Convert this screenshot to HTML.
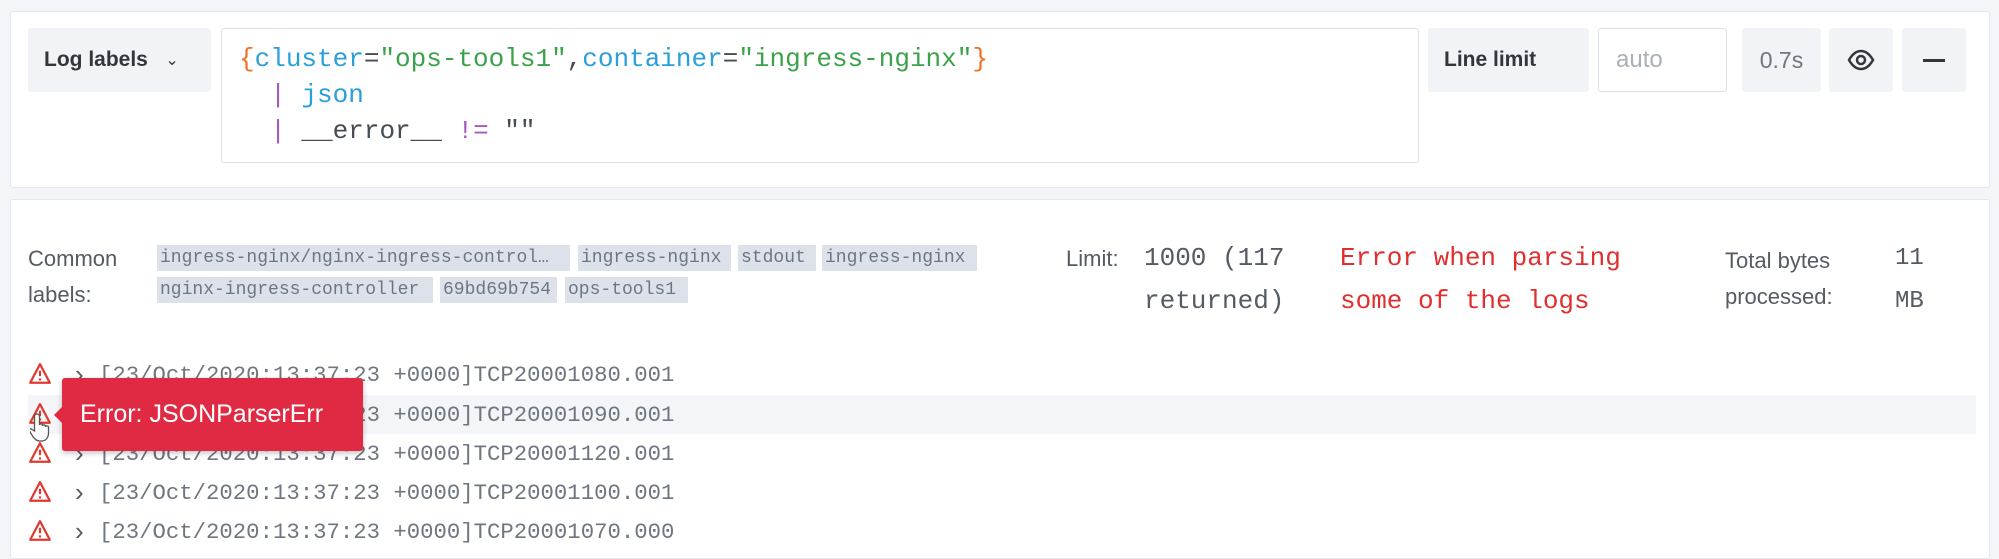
<!DOCTYPE html>
<html><head><meta charset="utf-8"><style>
*{box-sizing:border-box;margin:0;padding:0}
body{width:1999px;height:550px;background:#f4f5f8;font-family:"Liberation Sans",sans-serif;color:#464c54;position:relative;overflow:hidden}
.abs{position:absolute}
.panel{position:absolute;background:#fff;border:1px solid #e4e7ee;border-radius:3px}
.btn{position:absolute;background:#f1f3f7;border-radius:3px;display:flex;align-items:center;justify-content:center;font-size:22px;color:#33373d}
.q{position:absolute;left:239px;font-size:26px;white-space:pre;font-family:"Liberation Mono",monospace;color:#464c54}
.o{color:#f0702a}.b{color:#2a9fd8}.g{color:#3ca24a}.p{color:#a65bbf}
.chip{position:absolute;height:26px;background:#dde2ea;color:#6e7680;font-family:"Liberation Mono",monospace;font-size:18px;line-height:26px;padding:0 3px;white-space:nowrap;overflow:hidden}
.lbl{position:absolute;font-size:22px;color:#555b63}
.mv{position:absolute;font-family:"Liberation Mono",monospace;font-size:26px;white-space:pre;line-height:43px}
.row{position:absolute;left:28px;height:39px;width:1948px}
.row svg{position:absolute;left:0px;top:7px}
.row .ch{position:absolute;left:47px;top:4px;font-size:26px;color:#555b63}
.row .t{position:absolute;left:71px;top:7px;font-family:"Liberation Mono",monospace;font-size:22.3px;color:#6e7680;white-space:pre}
</style></head><body>
<div class="panel" style="left:10px;top:11px;width:1980px;height:177px"></div>
<div class="btn" style="left:28px;top:28px;width:183px;height:64px;justify-content:flex-start;padding-left:16px;font-weight:bold;font-size:21px">Log labels&nbsp;&nbsp;&nbsp;<span style="font-size:16px;font-weight:normal">&#8964;</span></div>
<div class="abs" style="left:221px;top:28px;width:1198px;height:135px;border:1px solid #dde1e8;border-radius:3px;background:#fff"></div>
<div class="q" style="top:44px"><span class="o">{</span><span class="b">cluster</span>=<span class="g">"ops-tools1"</span>,<span class="b">container</span>=<span class="g">"ingress-nginx"</span><span class="o">}</span></div>
<div class="q" style="top:80px">  <span class="p">|</span> <span class="b">json</span></div>
<div class="q" style="top:116px">  <span class="p">|</span> __error__ <span class="p">!=</span> ""</div>
<div class="btn" style="left:1428px;top:28px;width:161px;height:64px;justify-content:flex-start;padding-left:16px;font-weight:bold;font-size:21px">Line limit</div>
<div class="abs" style="left:1598px;top:28px;width:129px;height:64px;border:1px solid #dde1e8;border-radius:3px;background:#fff;font-size:24px;color:#aab0b8;padding:17px 0 0 17px">auto</div>
<div class="btn" style="left:1742px;top:28px;width:79px;height:64px;color:#6e7680;font-size:23px">0.7s</div>
<div class="btn" style="left:1829px;top:28px;width:64px;height:64px"><svg width="28" height="22" viewBox="0 0 28 22"><path d="M2 11C6 4 10 2 14 2s8 2 12 9c-4 7-8 9-12 9S6 18 2 11z" fill="none" stroke="#33373d" stroke-width="2.5"/><circle cx="14" cy="11" r="4" fill="none" stroke="#33373d" stroke-width="2.5"/></svg></div>
<div class="btn" style="left:1902px;top:28px;width:64px;height:64px"><div style="width:22px;height:3px;background:#33373d"></div></div>

<div class="panel" style="left:10px;top:199px;width:1980px;height:360px"></div>
<div class="lbl" style="left:28px;top:241px;line-height:36px">Common<br>labels:</div>
<div class="chip" style="left:157px;top:245px;width:413px">ingress-nginx/nginx-ingress-control…</div>
<div class="chip" style="left:578px;top:245px;width:153px">ingress-nginx</div>
<div class="chip" style="left:738px;top:245px;width:78px">stdout</div>
<div class="chip" style="left:822px;top:245px;width:155px">ingress-nginx</div>
<div class="chip" style="left:157px;top:277px;width:276px">nginx-ingress-controller</div>
<div class="chip" style="left:440px;top:277px;width:117px">69bd69b754</div>
<div class="chip" style="left:565px;top:277px;width:123px">ops-tools1</div>
<div class="lbl" style="left:1066px;top:246px">Limit:</div>
<div class="mv" style="left:1144px;top:237px;color:#555b63">1000 (117
returned)</div>
<div class="mv" style="left:1340px;top:237px;color:#e02f2f">Error when parsing
some of the logs</div>
<div class="lbl" style="left:1725px;top:243px;line-height:36px">Total bytes<br>processed:</div>
<div class="mv" style="left:1895px;top:237px;color:#555b63;font-size:24px">11
MB</div>

<div class="row" style="top:355px"><svg width="24" height="24" viewBox="0 0 22 22"><path d="M11 2L20 19H2z" fill="none" stroke="#e0392f" stroke-width="2" stroke-linejoin="round"/><path d="M11 8v5M11 15v2" stroke="#e0392f" stroke-width="2"/></svg><span class="ch">›</span><span class="t">[23/Oct/2020:13:37:23 +0000]TCP20001080.001</span></div>
<div class="row" style="top:395px;background:#f4f5f8"><svg width="24" height="24" viewBox="0 0 22 22"><path d="M11 2L20 19H2z" fill="none" stroke="#e0392f" stroke-width="2" stroke-linejoin="round"/><path d="M11 8v5M11 15v2" stroke="#e0392f" stroke-width="2"/></svg><span class="ch">›</span><span class="t">[23/Oct/2020:13:37:23 +0000]TCP20001090.001</span></div>
<div class="row" style="top:434px"><svg width="24" height="24" viewBox="0 0 22 22"><path d="M11 2L20 19H2z" fill="none" stroke="#e0392f" stroke-width="2" stroke-linejoin="round"/><path d="M11 8v5M11 15v2" stroke="#e0392f" stroke-width="2"/></svg><span class="ch">›</span><span class="t">[23/Oct/2020:13:37:23 +0000]TCP20001120.001</span></div>
<div class="row" style="top:473px"><svg width="24" height="24" viewBox="0 0 22 22"><path d="M11 2L20 19H2z" fill="none" stroke="#e0392f" stroke-width="2" stroke-linejoin="round"/><path d="M11 8v5M11 15v2" stroke="#e0392f" stroke-width="2"/></svg><span class="ch">›</span><span class="t">[23/Oct/2020:13:37:23 +0000]TCP20001100.001</span></div>
<div class="row" style="top:512px"><svg width="24" height="24" viewBox="0 0 22 22"><path d="M11 2L20 19H2z" fill="none" stroke="#e0392f" stroke-width="2" stroke-linejoin="round"/><path d="M11 8v5M11 15v2" stroke="#e0392f" stroke-width="2"/></svg><span class="ch">›</span><span class="t">[23/Oct/2020:13:37:23 +0000]TCP20001070.000</span></div>

<div class="abs" style="left:62px;top:378px;width:301px;height:73px;background:#e02a43;border-radius:3px;box-shadow:0 2px 6px rgba(0,0,0,.25);color:#fff;font-size:25px;padding:22px 0 0 18px;white-space:nowrap">Error: JSONParserErr</div>
<div class="abs" style="left:54px;top:407px;width:0;height:0;border-top:8px solid transparent;border-bottom:8px solid transparent;border-right:8px solid #e02a43"></div>
<svg class="abs" style="left:30px;top:412px" width="24" height="32" viewBox="0 0 24 32"><path d="M7 2c1.5 0 2.5 1 2.5 2.5V13c0-1.5 3-1.5 3 0v1c0-1.5 3-1.5 3 0v1c0-1.5 3-1.5 3 0v6c0 5-3 8-7 8h-2c-3 0-5-2-7-5l-3-5c-1-1.5 1-3 2.5-1.5L4.5 19V4.5C4.5 3 5.5 2 7 2z" fill="#fff" stroke="#555" stroke-width="1.3"/></svg>
</body></html>
